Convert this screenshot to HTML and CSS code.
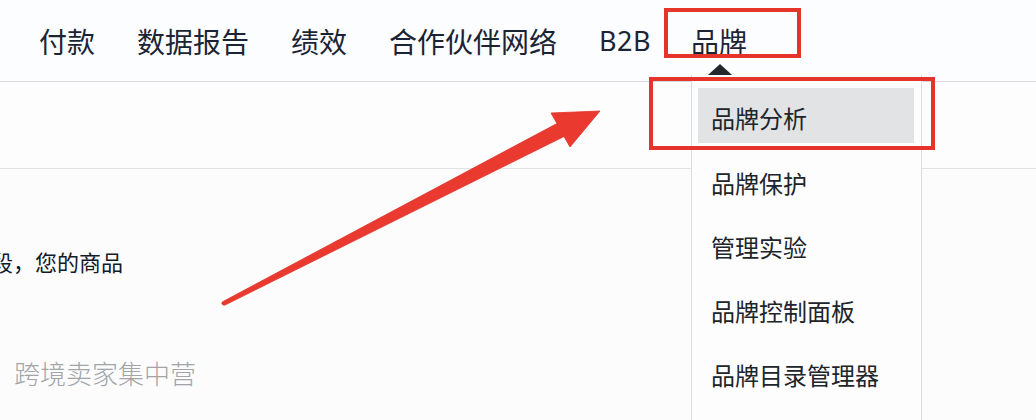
FILE: index.html
```html
<!DOCTYPE html>
<html lang="zh-CN">
<head>
<meta charset="utf-8">
<title>品牌</title>
<link rel="stylesheet" href="styles.css">
</head>
<body>
<div class="page">
  <nav class="nav">
    <span class="nav-item">付款</span>
    <span class="nav-item">数据报告</span>
    <span class="nav-item">绩效</span>
    <span class="nav-item">合作伙伴网络</span>
    <span class="nav-item latin">B2B</span>
    <span class="nav-item">品牌</span>
  </nav>
  <div class="band"></div>
  <main class="content">
    <p class="line">段，您的商品</p>
    <p class="watermark">跨境卖家集中营</p>
  </main>

  <div class="dropdown">
    <span class="caret"></span>
    <ul class="menu">
      <li class="menu-item active">品牌分析</li>
      <li class="menu-item">品牌保护</li>
      <li class="menu-item">管理实验</li>
      <li class="menu-item">品牌控制面板</li>
      <li class="menu-item">品牌目录管理器</li>
    </ul>
  </div>

  <div class="mark mark-nav"></div>
  <div class="mark mark-menu"></div>

  <svg class="arrow" width="1036" height="420" viewBox="0 0 1036 420">
    <path d="M222 304 Q221 302 224 301 L557 123.5 L551 113 L600 111 L570 147 L564 136.5 L225 305 Q223 305.5 222 304 Z" fill="#ea3a2f" stroke="#e0322a" stroke-width="0.8" stroke-linejoin="round"/>
  </svg>
</div>
</body>
</html>
```
FILE: styles.css
```css
html, body {
  margin: 0;
  padding: 0;
}
body {
  background: #fcfcfd;
  font-family: "Noto Sans CJK SC", "Noto Sans", sans-serif;
  width: 1036px;
  height: 420px;
  overflow: hidden;
}
.page {
  position: relative;
  width: 1036px;
  height: 420px;
}
.nav {
  height: 82px;
  box-sizing: border-box;
  display: flex;
  align-items: center;
  gap: 42px;
  padding-left: 39px;
  background: #fcfdfe;
  border-bottom: 1px solid #d6d8db;
  box-shadow: 0 1px 2px rgba(0,0,0,0.06);
  font-size: 28px;
  color: #1b2434;
  line-height: 1;
}
.nav-item {
  display: block;
  white-space: nowrap;
}
.nav-item.latin {
  font-family: "Noto Sans", "Open Sans", sans-serif;
  font-size: 27px;
  letter-spacing: 0.5px;
  margin-right: -2px;
}
.band {
  height: 87px;
  box-sizing: border-box;
  border-bottom: 1px solid #e1e2e4;
  background: #fdfdfe;
}
.content {
  overflow: hidden;
}
.content p {
  margin: 0;
}
.line {
  font-size: 22px;
  line-height: 30px;
  color: #111a28;
  padding-top: 77px;
  text-indent: -9px;
  white-space: nowrap;
}
.watermark {
  font-size: 26px;
  font-weight: 300;
  line-height: 32px;
  color: #a2a4a8;
  padding-top: 81px;
  padding-left: 14px;
}
.dropdown {
  position: absolute;
  left: 691px;
  top: 75px;
  width: 231px;
  height: 360px;
  box-sizing: border-box;
  background: #fdfdfe;
  border-left: 1px solid #dcdde0;
  border-right: 1px solid #dcdde0;
}
.caret {
  position: absolute;
  left: 16px;
  top: -11px;
  width: 0;
  height: 0;
  border-left: 12px solid transparent;
  border-right: 12px solid transparent;
  border-bottom: 11px solid #23272e;
}
.menu {
  list-style: none;
  margin: 0;
  padding: 13px 7px 0 6px;
}
.menu-item {
  height: 64px;
  box-sizing: border-box;
  padding-left: 13px;
  padding-top: 0;
  display: flex;
  align-items: center;
  font-size: 24px;
  color: #20242b;
  white-space: nowrap;
}
.menu-item.active {
  height: 55px;
  margin-bottom: 7px;
  padding-top: 3px;
  background: #e2e3e5;
}
.mark {
  position: absolute;
  box-sizing: border-box;
  border: 4px solid #e5352b;
}
.mark-nav {
  left: 664px;
  top: 8px;
  width: 137px;
  height: 50px;
}
.mark-menu {
  left: 649px;
  top: 77px;
  width: 286px;
  height: 73px;
}
.arrow {
  position: absolute;
  left: 0;
  top: 0;
  pointer-events: none;
}
```
